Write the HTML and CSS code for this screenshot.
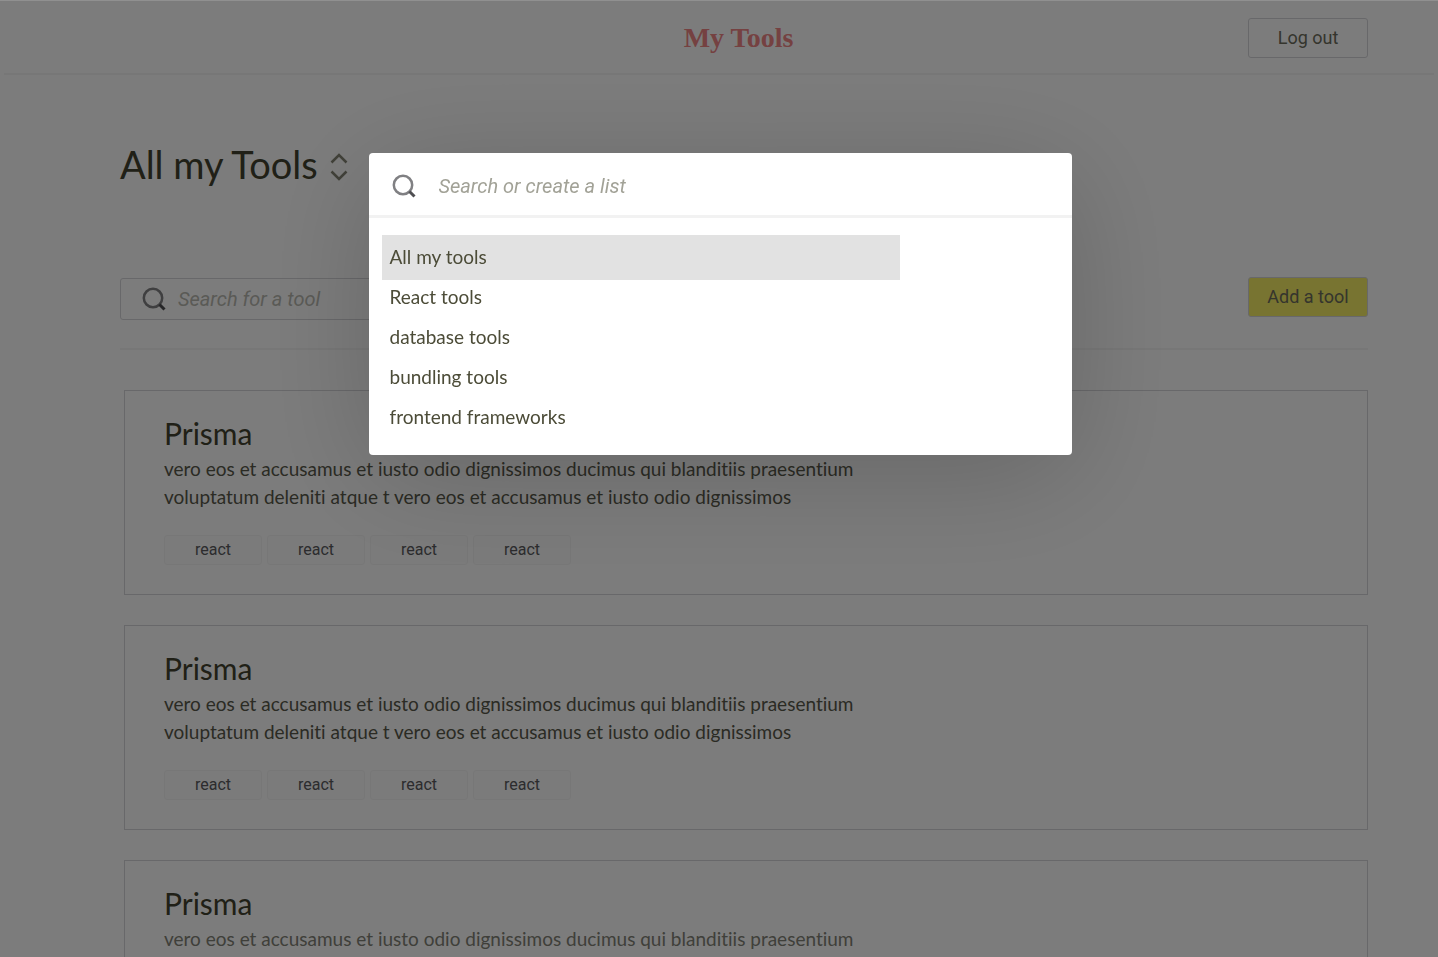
FILE: index.html
```html
<!DOCTYPE html>
<html lang="en">
<head>
<meta charset="utf-8">
<title>My Tools</title>
<link rel="stylesheet" href="styles.css">
</head>
<body>
<header class="header">
  <a class="logo" href="#">My Tools</a>
  <button class="btn logout" type="button">Log out</button>
</header>
<main class="main">
  <h1 class="title">
    <button class="title-btn" type="button">All my Tools
      <svg class="chevrons" viewBox="0 0 18 28" aria-hidden="true"><path d="M1.500 9.500 9 2l7.500 7.500M1.500 18.500 9 26l7.500-7.500"/></svg>
    </button>
  </h1>
  <div class="toolbar">
    <label class="search">
      <svg class="lens" viewBox="0 0 24 24" aria-hidden="true"><circle cx="11" cy="11" r="9.200"/><path d="m17.500 17.500 5 5"/></svg>
      <input class="field" type="text" placeholder="Search for a tool" aria-label="Search for a tool">
    </label>
    <button class="btn add" type="button">Add a tool</button>
  </div>
  <div class="cards">
    <article class="card">
      <h2 class="card-title">Prisma</h2>
      <p class="desc">vero eos et accusamus et iusto odio dignissimos ducimus qui blanditiis praesentium voluptatum deleniti atque t vero eos et accusamus et iusto odio dignissimos</p>
      <div class="tags"><span class="tag">react</span><span class="tag">react</span><span class="tag">react</span><span class="tag">react</span></div>
    </article>
    <article class="card">
      <h2 class="card-title">Prisma</h2>
      <p class="desc">vero eos et accusamus et iusto odio dignissimos ducimus qui blanditiis praesentium voluptatum deleniti atque t vero eos et accusamus et iusto odio dignissimos</p>
      <div class="tags"><span class="tag">react</span><span class="tag">react</span><span class="tag">react</span><span class="tag">react</span></div>
    </article>
    <article class="card loading">
      <h2 class="card-title">Prisma</h2>
      <p class="desc">vero eos et accusamus et iusto odio dignissimos ducimus qui blanditiis praesentium</p>
    </article>
  </div>
</main>
<div class="overlay">
  <div class="modal" role="dialog" aria-modal="true" aria-label="Lists">
    <label class="modal-search">
      <svg class="lens" viewBox="0 0 24 24" aria-hidden="true"><circle cx="11" cy="11" r="9.200"/><path d="m17.500 17.500 5 5"/></svg>
      <input class="field" type="text" placeholder="Search or create a list" aria-label="Search or create a list">
    </label>
    <ul class="lists">
      <li><button class="item selected" type="button">All my tools</button></li>
      <li><button class="item" type="button">React tools</button></li>
      <li><button class="item" type="button">database tools</button></li>
      <li><button class="item" type="button">bundling tools</button></li>
      <li><button class="item" type="button">frontend frameworks</button></li>
    </ul>
  </div>
</div>
</body>
</html>
```
FILE: styles.css
```css
* { box-sizing: border-box; }
body {
  margin: 0;
  height: 100vh;
  overflow: hidden;
  background: #fdfdfd;
  color: #43432f;
  font-family: Roboto, sans-serif;
  font-variant-ligatures: none;
}
h1, h2, p, ul { margin: 0; padding: 0; font-weight: 400; }
button, input { font: inherit; color: inherit; }

.header {
  display: grid;
  grid-template-columns: 1fr auto 1fr;
  align-items: center;
  height: 75px;
  margin: 0 4px;
  padding: 3px 66px 0 105px;
  border-bottom: 2px solid #f3f3f3;
}
.logo {
  grid-column: 2;
  color: #ee8585;
  font: 700 28px/32px "Liberation Serif", serif;
  text-decoration: none;
}
.btn {
  width: 120px;
  height: 40px;
  padding: 0 0 1px;
  border: 1px solid #d4d4d8;
  border-radius: 3px;
  background: #fdfdfd;
  color: #6c6c5c;
  font-size: 18px;
}
.logout { justify-self: end; }
.add { background: #f4ec64; }

.main { padding: 61px 70px 0 120px; }
.title { font-family: Lato, sans-serif; font-size: 38px; line-height: 56px; }
.title-btn {
  display: flex;
  align-items: center;
  gap: 12px;
  padding: 0;
  border: 0;
  background: none;
}
.chevrons {
  width: 18px;
  height: 28px;
  margin-top: 5px;
  fill: none;
  stroke: #858575;
  stroke-width: 2.5;
}
.toolbar {
  display: flex;
  justify-content: space-between;
  margin-top: 85px;
  padding-bottom: 28px;
  border-bottom: 2px solid #f3f3f3;
}
.search {
  display: flex;
  align-items: center;
  gap: 12px;
  width: 480px;
  height: 42px;
  margin-top: 1px;
  padding-left: 21px;
  border: 1px solid #d4d4d8;
  border-radius: 3px;
}
.lens {
  flex: none;
  width: 24px;
  height: 24px;
  fill: none;
  stroke: #808083;
  stroke-width: 2.5;
}
.lens path { stroke: #4f4f52; stroke-width: 3; }
.field {
  flex: 1;
  min-width: 0;
  padding: 0;
  border: 0;
  outline: 0;
  background: none;
  font-size: 20px;
}
.field::placeholder { color: #a2a297; font-style: italic; opacity: 1; }
.search .field::placeholder { color: #b8b8b0; }

.cards { display: grid; gap: 30px; padding: 40px 0 0 4px; }
.card { padding: 24px 39px 29px; border: 1px solid #d4d4d8; }
.card-title { font-family: Lato, sans-serif; font-size: 30px; line-height: 36px; }
.desc {
  max-width: 720px;
  margin-top: 4px;
  color: #58584a;
  font-family: Lato, sans-serif;
  font-size: 19px;
  line-height: 28px;
}
.loading .desc { color: #828276; }
.tags { display: flex; gap: 5px; margin-top: 24px; }
.tag {
  width: 98px;
  border: 1px solid #f3f3f3;
  border-radius: 3px;
  background: #fafafa;
  color: #5a5a5e;
  font-size: 16px;
  line-height: 28px;
  text-align: center;
}

.overlay {
  position: fixed;
  inset: 0;
  display: flex;
  justify-content: center;
  align-items: flex-start;
  padding: 152px 0 0 2px;
  border-top: 1px solid rgba(0, 0, 0, .43);
  background: rgba(0, 0, 0, .51) padding-box;
}
.modal {
  width: 703px;
  max-width: 100%;
  border-radius: 4px;
  background: #fff;
  box-shadow: 0 20px 120px rgba(0, 0, 0, .18);
}
.modal-search {
  display: flex;
  align-items: center;
  gap: 23px;
  height: 65px;
  padding: 4px 23px 0;
  border-bottom: 3px solid #f2f2f2;
}
.lists { padding: 19px 13px 18px; list-style: none; }
.item {
  display: block;
  width: 518px;
  max-width: 100%;
  height: 40px;
  padding: 0 8px 2px;
  border: 0;
  background: none;
  color: #4c4c38;
  font-family: Lato, sans-serif;
  font-size: 19px;
  text-align: left;
}
.selected { height: 45px; margin: -2px 0 -3px; background: #e2e2e2; }
```
